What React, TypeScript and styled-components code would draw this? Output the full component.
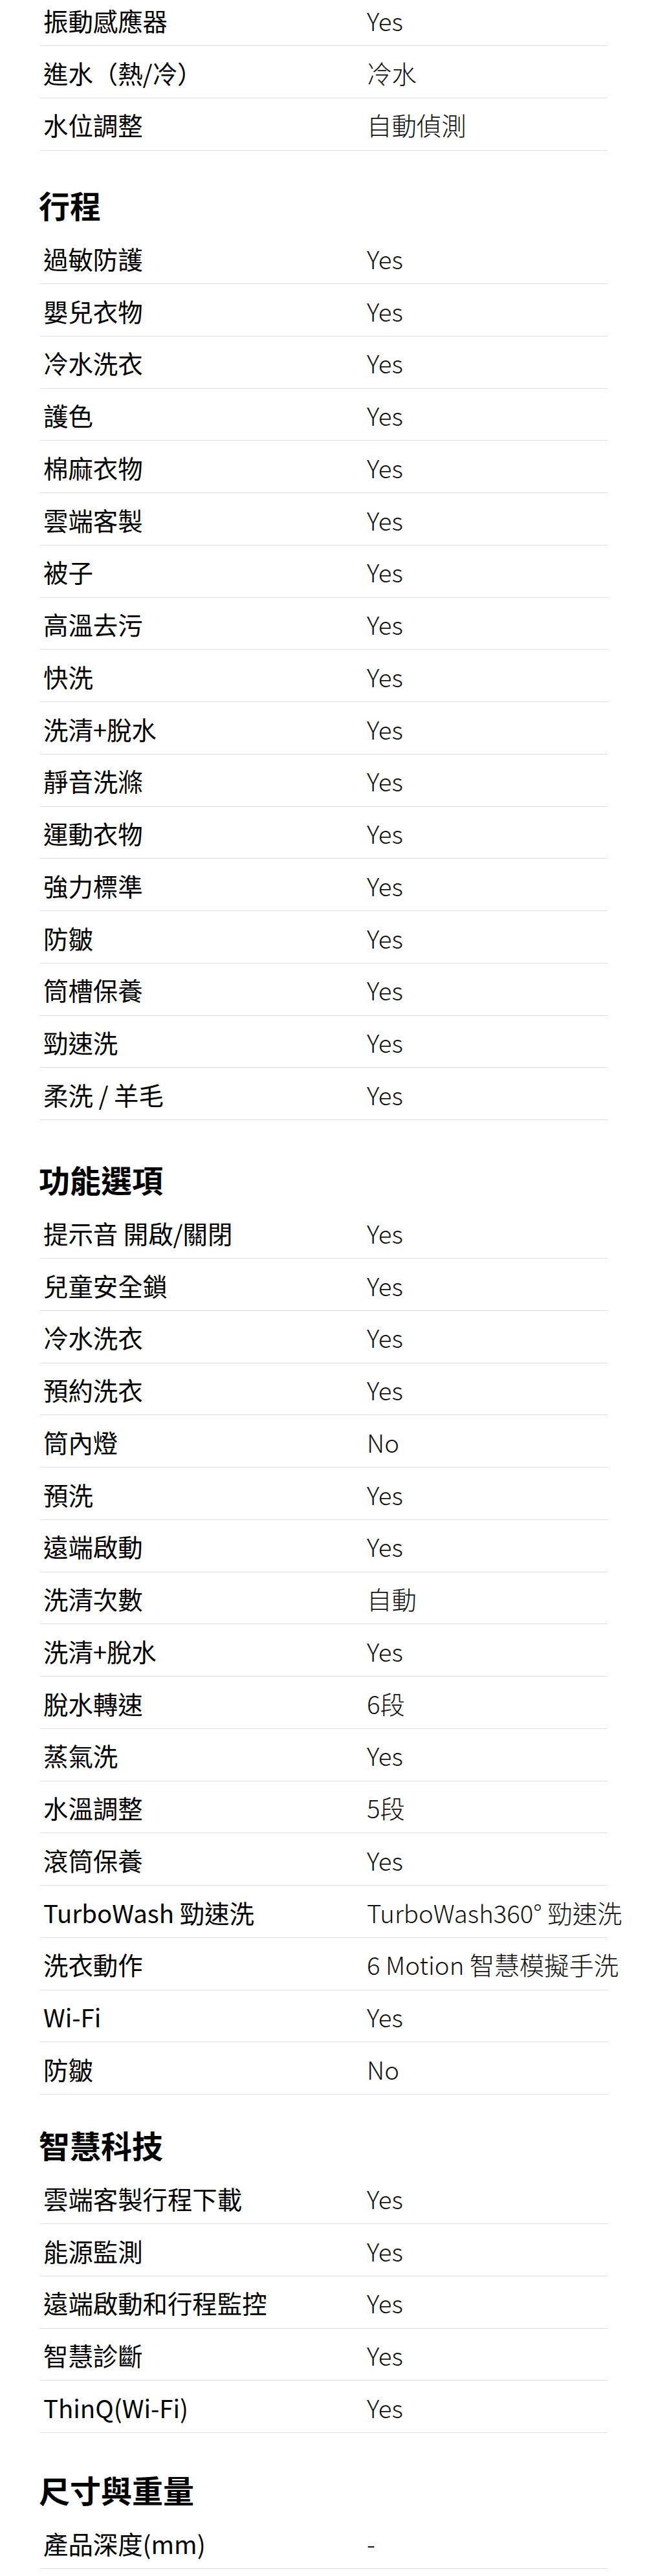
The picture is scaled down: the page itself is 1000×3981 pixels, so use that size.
import React from "react";
import styled, { createGlobalStyle } from "styled-components";

const GlobalStyle = createGlobalStyle`
  html, body {
    margin: 0;
    padding: 0;
    background: #ffffff;
  }
  body {
    font-family: "Noto Sans CJK TC", "Noto Sans", "Liberation Sans", sans-serif;
    color: #000000;
  }
`;

const Page = styled.div`
  width: 877px;
  margin: -9.75px 0 0 62px;
`;

const Section = styled.section<{ $top: number }>`
  margin-top: ${(p) => p.$top}px;
`;

const Heading = styled.h2`
  margin: 0 0 12px -2px;
  font-family: "Noto Sans CJK TC", sans-serif;
  font-size: 48px;
  line-height: 60px;
  font-weight: 700;
  color: #000000;
`;

const SpecList = styled.dl`
  margin: 0;
  padding: 0;
`;

const SpecRow = styled.div`
  display: grid;
  grid-template-columns: 500px 1fr;
  padding: 12.5px 0 11.25px 5px;
  border-bottom: 1px solid #dddddd;
  font-size: 38.4px;
  line-height: 56px;
`;

const Label = styled.dt`
  margin: 0;
  font-family: "Noto Sans CJK TC", sans-serif;
  font-weight: 400;
  color: #000000;
  white-space: nowrap;
`;

const Value = styled.dd`
  margin: 0;
  font-family: "Noto Sans CJK TC", sans-serif;
  font-weight: 300;
  color: #111111;
  white-space: nowrap;
`;

type Spec = [string, string];

interface SpecSection {
  title?: string;
  top: number;
  rows: Spec[];
}

const sections: SpecSection[] = [
  {
    top: 0,
    rows: [
      ["振動感應器", "Yes"],
      ["進水（熱/冷）", "冷水"],
      ["水位調整", "自動偵測"],
    ],
  },
  {
    title: "行程",
    top: 53.75,
    rows: [
      ["過敏防護", "Yes"],
      ["嬰兒衣物", "Yes"],
      ["冷水洗衣", "Yes"],
      ["護色", "Yes"],
      ["棉麻衣物", "Yes"],
      ["雲端客製", "Yes"],
      ["被子", "Yes"],
      ["高溫去污", "Yes"],
      ["快洗", "Yes"],
      ["洗清+脫水", "Yes"],
      ["靜音洗滌", "Yes"],
      ["運動衣物", "Yes"],
      ["強力標準", "Yes"],
      ["防皺", "Yes"],
      ["筒槽保養", "Yes"],
      ["勁速洗", "Yes"],
      ["柔洗 / 羊毛", "Yes"],
    ],
  },
  {
    title: "功能選項",
    top: 61.25,
    rows: [
      ["提示音 開啟/關閉", "Yes"],
      ["兒童安全鎖", "Yes"],
      ["冷水洗衣", "Yes"],
      ["預約洗衣", "Yes"],
      ["筒內燈", "No"],
      ["預洗", "Yes"],
      ["遠端啟動", "Yes"],
      ["洗清次數", "自動"],
      ["洗清+脫水", "Yes"],
      ["脫水轉速", "6段"],
      ["蒸氣洗", "Yes"],
      ["水溫調整", "5段"],
      ["滾筒保養", "Yes"],
      ["TurboWash 勁速洗", "TurboWash360° 勁速洗"],
      ["洗衣動作", "6 Motion 智慧模擬手洗"],
      ["Wi-Fi", "Yes"],
      ["防皺", "No"],
    ],
  },
  {
    title: "智慧科技",
    top: 47.25,
    rows: [
      ["雲端客製行程下載", "Yes"],
      ["能源監測", "Yes"],
      ["遠端啟動和行程監控", "Yes"],
      ["智慧診斷", "Yes"],
      ["ThinQ(Wi-Fi)", "Yes"],
    ],
  },
  {
    title: "尺寸與重量",
    top: 57.25,
    rows: [["產品深度(mm)", "-"]],
  },
];

export default function App() {
  return (
    <>
      <GlobalStyle />
      <Page>
        {sections.map((section, i) => (
          <Section key={i} $top={section.top}>
            {section.title && <Heading>{section.title}</Heading>}
            <SpecList>
              {section.rows.map(([label, value], j) => (
                <SpecRow key={j}>
                  <Label>{label}</Label>
                  <Value>{value}</Value>
                </SpecRow>
              ))}
            </SpecList>
          </Section>
        ))}
      </Page>
    </>
  );
}
